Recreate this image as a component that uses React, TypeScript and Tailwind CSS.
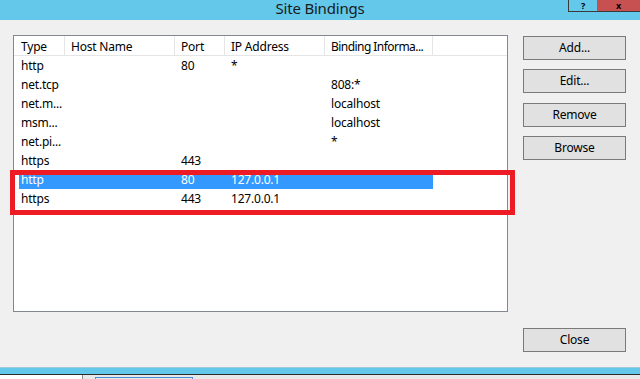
import React from "react";

type Row = { type: string; host: string; port: string; ip: string; info: string; sel?: boolean };

const rows: Row[] = [
  { type: "http", host: "", port: "80", ip: "*", info: "" },
  { type: "net.tcp", host: "", port: "", ip: "", info: "808:*" },
  { type: "net.m...", host: "", port: "", ip: "", info: "localhost" },
  { type: "msm...", host: "", port: "", ip: "", info: "localhost" },
  { type: "net.pi...", host: "", port: "", ip: "", info: "*" },
  { type: "https", host: "", port: "443", ip: "", info: "" },
  { type: "http", host: "", port: "80", ip: "127.0.0.1", info: "", sel: true },
  { type: "https", host: "", port: "443", ip: "127.0.0.1", info: "" },
];

function Btn({ label, className = "" }: { label: string; className?: string }) {
  return (
    <div
      className={`w-[103px] h-[24px] bg-[#e1e1e1] border border-[#7a7a7a] flex items-center justify-center text-[12px] text-black ${className}`}
    >
      {label}
    </div>
  );
}

export default function App() {
  return (
    <div
      className="relative w-[640px] h-[379px] overflow-hidden bg-[#f0f0f0] text-black tracking-[-0.2px]"
      style={{ fontFamily: '"Segoe UI", "Noto Sans", sans-serif' }}
    >
      {/* Title bar */}
      <div className="relative h-[20px] bg-[#63c8ea] flex justify-center">
        <div className="text-[15px] leading-[17px] text-[#1a1a1a] whitespace-nowrap">Site Bindings</div>
        <div className="absolute left-[568px] top-0 w-[30px] h-[12px] border-l border-b border-r border-[#3a3a3a] flex justify-center">
          <span className="pt-[1px] text-[9px] leading-[10px] font-bold">?</span>
        </div>
        <div className="absolute left-[597px] top-0 w-[50px] h-[12px] bg-[#c75050] border-b border-[#3a3a3a] flex justify-center">
          <span className="ml-[-7px] pt-[1px] text-[9px] leading-[9px] font-bold">x</span>
        </div>
      </div>

      {/* Body */}
      <div className="flex h-[347px]">
        {/* List */}
        <div className="ml-[13px] mt-[15px] w-[495px] h-[277px] bg-white border border-[#828790]">
          <div className="flex h-[20px] border-b border-[#e5e5e5] text-[12px] leading-[21px] whitespace-nowrap">
            <div className="w-[51px] pl-[7px] border-r border-[#e5e5e5]">Type</div>
            <div className="w-[110px] pl-[6px] border-r border-[#e5e5e5]">Host Name</div>
            <div className="w-[50px] pl-[6px] border-r border-[#e5e5e5]">Port</div>
            <div className="w-[100px] pl-[6px] border-r border-[#e5e5e5]">IP Address</div>
            <div className="w-[108px] pl-[6px] border-r border-[#e5e5e5] tracking-[-0.55px]">Binding Informa...</div>
          </div>
          <div className="flex flex-col">
            {rows.map((r, i) => (
              <div
                key={i}
                className={`ml-[5px] w-[414px] h-[19px] flex text-[12px] leading-[19px] whitespace-nowrap ${
                  r.sel ? "bg-[#3399ff] text-white" : "text-black"
                }`}
              >
                <div className="w-[46px] pl-[2px]">{r.type}</div>
                <div className="w-[110px] pl-[6px]">{r.host}</div>
                <div className="w-[50px] pl-[6px]">{r.port}</div>
                <div className="w-[100px] pl-[6px]">{r.ip}</div>
                <div className="w-[108px] pl-[6px]">{r.info}</div>
              </div>
            ))}
          </div>
        </div>

        {/* Buttons */}
        <div className="ml-[15px] flex flex-col pt-[16px] pb-[15px]">
          <Btn label="Add..." />
          <Btn label="Edit..." className="mt-[9px]" />
          <Btn label="Remove" className="mt-[10px]" />
          <Btn label="Browse" className="mt-[9px]" />
          <Btn label="Close" className="mt-auto" />
        </div>
      </div>

      {/* Bottom strip */}
      <div className="h-[7px] bg-[#63c8ea] border-t border-[#9ec9d8]" />
      <div className="h-[1px] bg-[#2b2b2b]" />
      <div className="flex h-[4px]">
        <div className="w-[82px] bg-white" />
        <div className="w-[1px] bg-[#8a8a8a]" />
        <div className="flex-1 bg-[#e8e8e8] pl-[12px] pt-[2px]">
          <div className="w-[98px] h-[4px] border-t border-l border-r border-[#4a90d9]" />
        </div>
      </div>

      {/* Red highlight annotation */}
      <div className="absolute left-[10px] top-[170px] w-[505px] h-[45px] border-[5px] border-[#ed1c24]" />
    </div>
  );
}
